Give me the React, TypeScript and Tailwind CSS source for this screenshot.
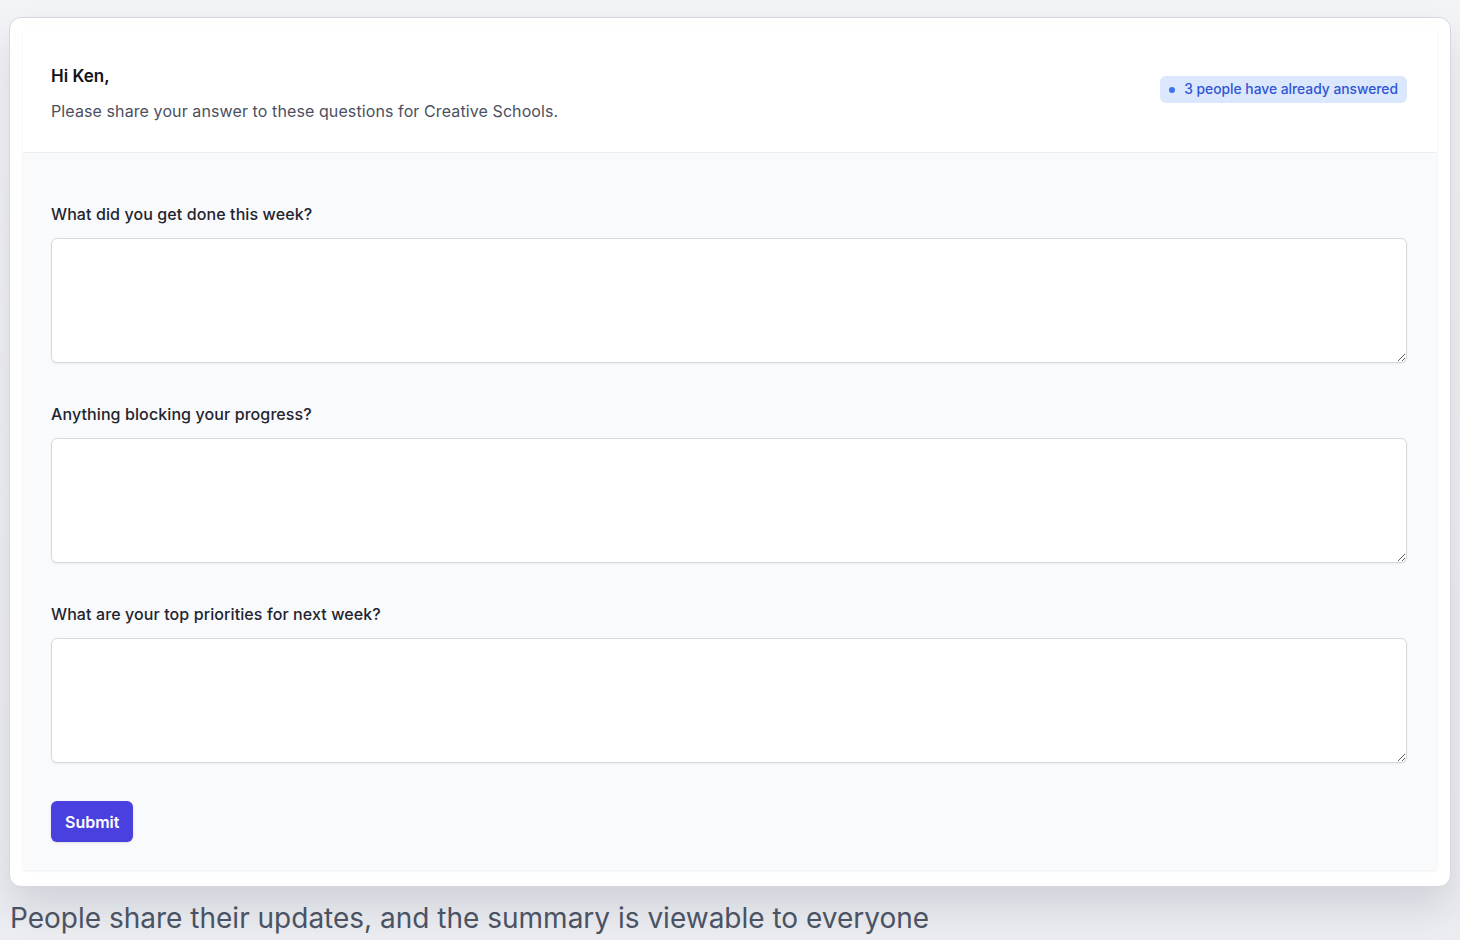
const questions = [
  'What did you get done this week?',
  'Anything blocking your progress?',
  'What are your top priorities for next week?',
]

function Question({ label }: { label: string }) {
  return (
    <div className="flex flex-col">
      <label className="text-[16px] leading-6 font-medium tracking-[0.1px] text-[#1f2430]">{label}</label>
      <textarea className="mt-3 h-[125px] w-full rounded-md border border-[#d6d8de] bg-white shadow-[0_1px_2px_rgba(0,0,0,0.06)] outline-none" />
    </div>
  )
}

export default function App() {
  return (
    <div className="min-h-[940px] bg-gradient-to-b from-[#f4f5f8] to-[#eceef2] pt-[17px] px-[9px] font-['Inter',sans-serif] overflow-hidden">
      <div className="h-[870px] rounded-xl border border-[#d6d7dc] bg-white px-[13px] pt-[12px] pb-[16px] shadow-[0_20px_40px_rgba(120,124,140,0.25)]">
        <div className="flex h-full flex-col rounded-sm bg-white shadow-[0_1px_3px_rgba(0,0,0,0.08)]">
          <div className="flex h-[123px] items-start justify-between border-b border-[#eceef1] pl-[28px] pr-[30px] pt-[34px]">
            <div>
              <div className="text-[17px] leading-6 font-semibold text-[#111318]">Hi Ken,</div>
              <div className="mt-[11px] text-[16px] leading-6 tracking-[0.1px] text-[#4b5060]">
                Please share your answer to these questions for Creative Schools.
              </div>
            </div>
            <div className="mt-[12px] flex h-[27px] items-center gap-[9px] rounded-md bg-[#dbe7fd] pl-[9px] pr-[9px] text-[13.8px] font-medium text-[#2f55d4]">
              <span className="h-[6px] w-[6px] rounded-full bg-[#3b74ee]" />
              3 people have already answered
            </div>
          </div>
          <div className="flex flex-1 flex-col gap-[39px] rounded-b-sm bg-[#f9fafb] pl-[28px] pr-[30px] pt-[49px]">
            {questions.map((q) => (
              <Question key={q} label={q} />
            ))}
            <div className="-mt-px">
              <button className="h-[41px] rounded-md bg-[#4a3fdf] px-[14px] text-[16px] font-semibold text-white shadow-sm">
                Submit
              </button>
            </div>
          </div>
        </div>
      </div>
      <div className="mt-[13px] pl-[1px] text-[28px] leading-[36px] text-[#4a5263]">
        People share their updates, and the summary is viewable to everyone
      </div>
    </div>
  )
}
